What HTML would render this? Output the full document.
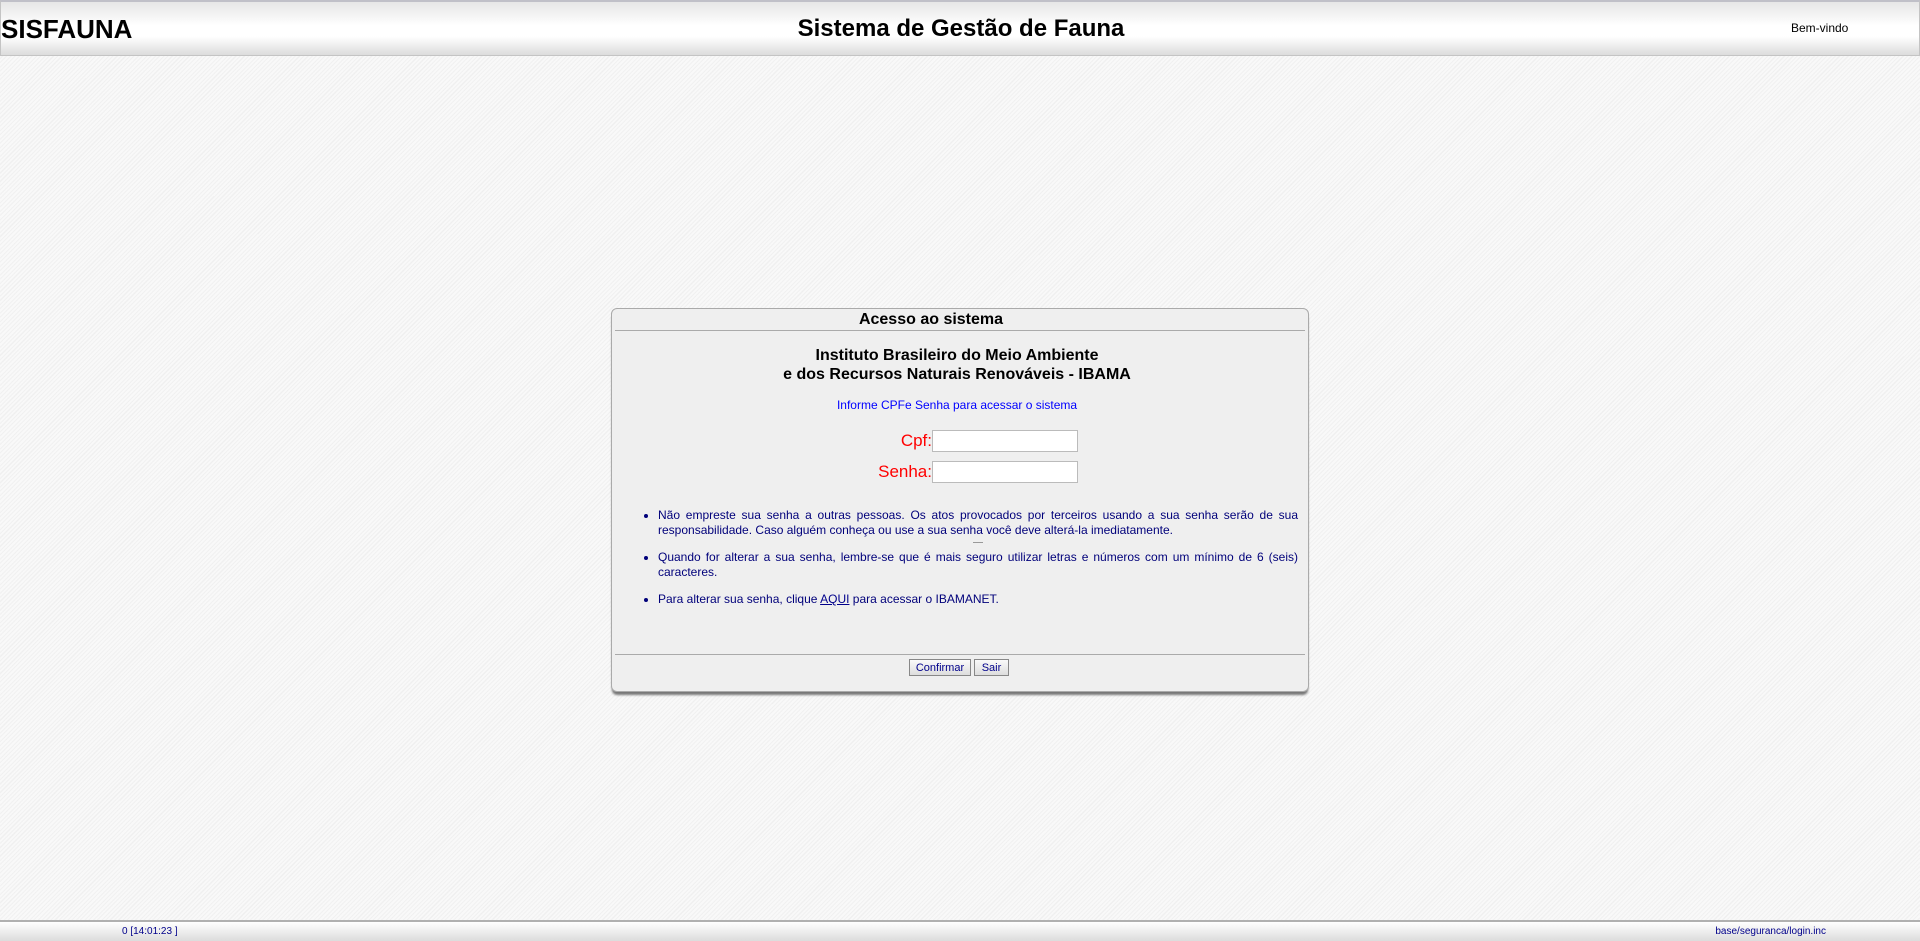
<!DOCTYPE html>
<html><head><meta charset="utf-8"><style>
*{box-sizing:border-box}
body{margin:0;width:1920px;height:941px;overflow:hidden;font-family:"Liberation Sans",sans-serif;
background:repeating-linear-gradient(135deg,#f9f9f9 0 2px,#efefef 2px 3px);position:relative}
#hdr{position:absolute;left:0;top:0;width:1920px;height:56px;border:1px solid #c4c4c4;border-top:2px solid #c0c0c8;
background:linear-gradient(#e6e6e6,#fff 45%,#fff 65%,#dcdcdc)}
#hdr .l{position:absolute;left:0px;top:12px;font-size:26px;font-weight:bold}
#hdr .c{position:absolute;left:0;width:1920px;text-align:center;top:13px;font-size:24px;font-weight:bold}
#hdr .r{position:absolute;left:1790px;top:19px;font-size:12px}
#panel{position:absolute;left:611px;top:308px;width:698px;height:384px;background:#efefef;border:1px solid #aaa;border-radius:6px;
box-shadow:0 4px 2px -1px #777;}
.t{text-align:center;font-weight:bold;font-size:16px}
#ft{position:absolute;left:0;top:920px;width:1920px;height:21px;border-top:2px solid #b0b0b0;background:linear-gradient(#fff,#dcdcdc);font-size:10px;color:#00008b}
ul{position:absolute;left:30px;top:199px;width:656px;margin:0;padding-left:16px;color:#00007a;font-size:12px;text-align:justify;line-height:15px}
li{margin-bottom:12px;position:relative}
input{position:absolute;width:146px;height:22px;border:1px solid #bbb;background:#fff}
.lb{position:absolute;color:#f00;font-size:17px;text-align:right;width:200px}
button{position:absolute;top:350px;height:17px;font-size:11px;color:#00008b;background:linear-gradient(#fafafa,#ddd);border:1px solid #888;padding:0;font-family:"Liberation Sans",sans-serif}
</style></head><body>
<div id="hdr"><div class="l">SISFAUNA</div><div class="c">Sistema de Gestão de Fauna</div><div class="r">Bem-vindo</div></div>
<div id="panel">
<div class="t" style="position:absolute;top:2px;left:0;width:638px">Acesso ao sistema</div>
<div style="position:absolute;left:3px;right:3px;top:21px;border-top:1px solid #aaa"></div>
<div class="t" style="position:absolute;top:37px;left:0;width:690px;line-height:19px">Instituto Brasileiro do Meio Ambiente<br>e dos Recursos Naturais Renováveis - IBAMA</div>
<div style="position:absolute;top:89px;left:0;width:690px;text-align:center;color:#0000ff;font-size:12px">Informe CPFe Senha para acessar o sistema</div>
<div class="lb" style="left:120px;top:122px">Cpf:</div><input style="left:320px;top:121px">
<div class="lb" style="left:120px;top:153px">Senha:</div><input style="left:320px;top:152px">
<ul>
<li>Não empreste sua senha a outras pessoas. Os atos provocados por terceiros usando a sua senha serão de sua responsabilidade. Caso alguém conheça ou use a sua senha você deve alterá-la imediatamente.<div style="position:absolute;left:315px;top:34px;width:10px;border-top:1px solid #999"></div></li>
<li>Quando for alterar a sua senha, lembre-se que é mais seguro utilizar letras e números com um mínimo de 6 (seis) caracteres.</li>
<li>Para alterar sua senha, clique <u style="color:#00008b">AQUI</u> para acessar o IBAMANET.</li>
</ul>
<div style="position:absolute;left:3px;right:3px;top:345px;border-top:1px solid #aaa"></div>
<button style="left:297px;width:62px">Confirmar</button>
<button style="left:362px;width:35px">Sair</button>
</div>
<div id="ft"><span style="position:absolute;left:122px;top:4px">0 [14:01:23 ]</span><span style="position:absolute;right:94px;top:4px">base/seguranca/login.inc</span></div>
</body></html>
